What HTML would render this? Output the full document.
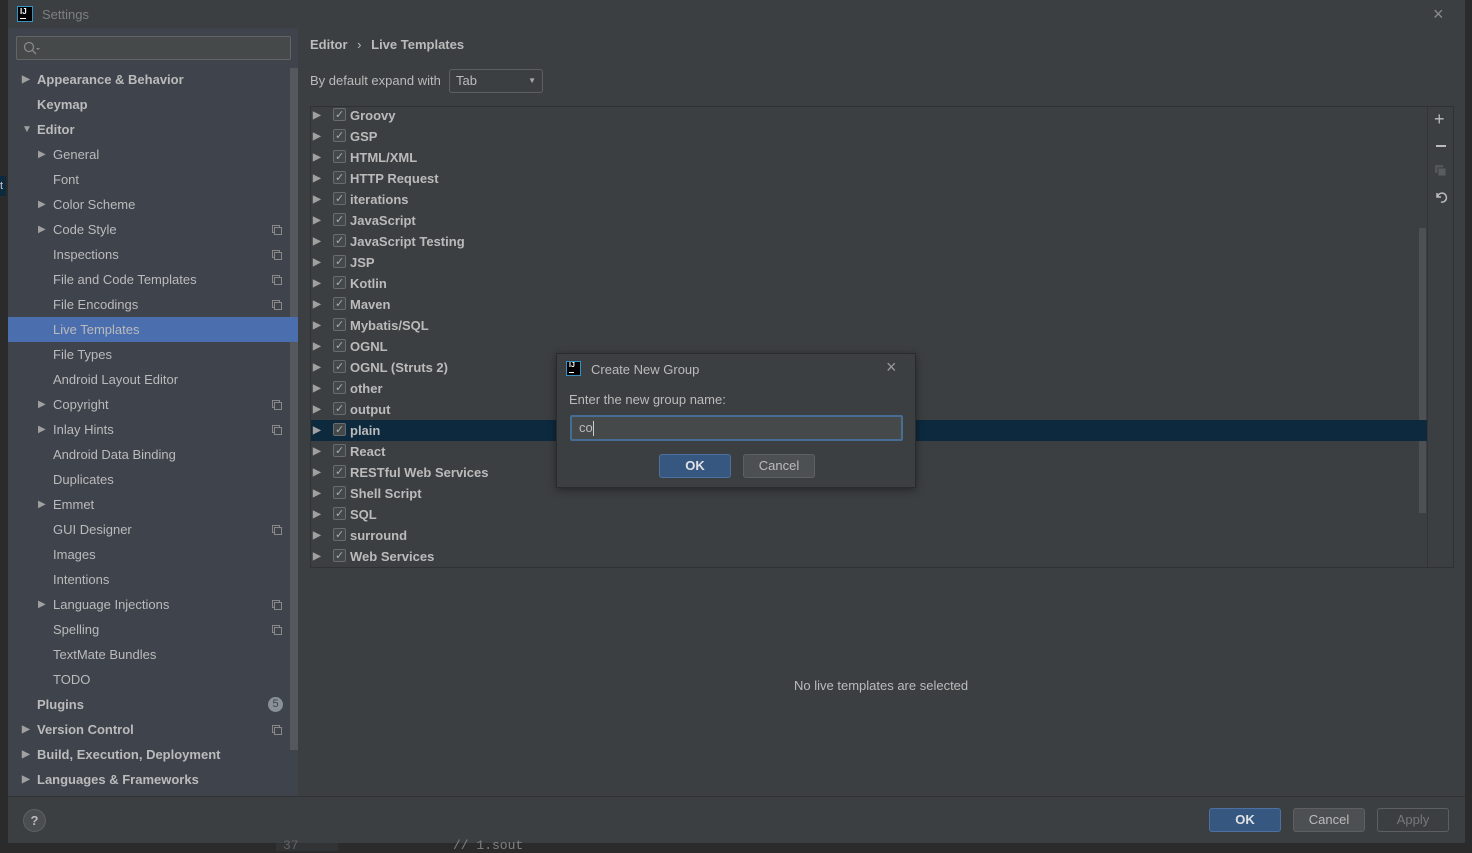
<!DOCTYPE html>
<html><head><meta charset="utf-8"><style>
*{box-sizing:border-box;margin:0;padding:0}
body{width:1472px;height:851px;background:#2b2b2b;font-family:"Liberation Sans",sans-serif;font-size:13px;color:#bbbbbb;position:relative;overflow:hidden}
.abs{position:absolute}
#win{left:8px;top:0;width:1457px;height:843px;background:#3c3f41}
.side{left:8px;top:28px;width:290px;height:768px;background:#3e434c}
.sr{position:absolute;left:0;width:290px;height:25px;line-height:25px;white-space:nowrap}
.b{font-weight:bold}
.tri{position:absolute;font-size:10px;color:#a0a0a0}
.cp{position:absolute;left:264px;top:8px;width:10px;height:10px}
.lr{position:absolute;left:0;width:1117px;height:21px;line-height:21px;font-weight:bold;white-space:nowrap}
.cb{position:absolute;left:22px;top:3px;width:13px;height:13px;border:1px solid #6b6b6b;border-radius:2px;background:#43494a}
.btn{position:absolute;height:24px;border-radius:3px;text-align:center;line-height:22px;border:1px solid #5e6060;background:#4c5052}
.ok{background:#365880;border-color:#4c70a0;color:#dfe1e5;font-weight:bold}
</style></head><body>
<div class="abs" style="left:0;top:0;width:8px;height:851px;background:#2b2b2b"></div>
<div class="abs" style="left:0;top:176px;width:6px;height:20px;background:#0d293e;color:#ccc;font-size:11px;line-height:20px">t</div>
<div class="abs" id="win"></div>
<!-- title -->
<div class="abs" style="left:17px;top:6px;width:16px;height:16px;background:#000;border:1px solid #3592c4;color:#fff;font-size:8px;font-weight:bold;line-height:9px;padding-left:2px">IJ<div style="width:6px;height:1px;background:#fff;margin-top:2px"></div></div>
<div class="abs" style="left:42px;top:7px;color:#7d7f81;font-size:13px">Settings</div>
<div class="abs" style="left:1433px;top:4px;color:#8c8c8c;font-size:18px">×</div>
<div class="abs side"></div>
<div class="abs" style="left:16px;top:36px;width:275px;height:24px;background:#45494a;border:1px solid #646464;border-radius:2px"><svg width="20" height="20" style="position:absolute;left:4px;top:2px"><circle cx="8" cy="8" r="4.5" fill="none" stroke="#888" stroke-width="1.3"/><path d="M11 11l4 4" stroke="#888" stroke-width="1.3"/><path d="M15 9h4l-2 2z" fill="#888"/></svg></div>
<div class="abs" style="left:290px;top:68px;width:8px;height:682px;background:#55585c"></div>
<div class="abs" style="left:8px;top:67px;width:290px;height:729px">
<div class="sr b" style="top:0"><span class="tri" style="left:14px">▶</span><span style="position:absolute;left:29px">Appearance &amp; Behavior</span></div>
<div class="sr b" style="top:25px"><span style="position:absolute;left:29px">Keymap</span></div>
<div class="sr b" style="top:50px"><span class="tri" style="left:14px">▼</span><span style="position:absolute;left:29px">Editor</span></div>
<div class="sr" style="top:75px"><span class="tri" style="left:30px">▶</span><span style="position:absolute;left:45px">General</span></div>
<div class="sr" style="top:100px"><span style="position:absolute;left:45px">Font</span></div>
<div class="sr" style="top:125px"><span class="tri" style="left:30px">▶</span><span style="position:absolute;left:45px">Color Scheme</span></div>
<div class="sr" style="top:150px"><span class="tri" style="left:30px">▶</span><span style="position:absolute;left:45px">Code Style</span><svg class="cp"><rect x="0.5" y="0.5" width="7" height="7" fill="none" stroke="#888"/><rect x="2.5" y="2.5" width="7" height="7" fill="#3e434c" stroke="#888"/></svg></div>
<div class="sr" style="top:175px"><span style="position:absolute;left:45px">Inspections</span><svg class="cp"><rect x="0.5" y="0.5" width="7" height="7" fill="none" stroke="#888"/><rect x="2.5" y="2.5" width="7" height="7" fill="#3e434c" stroke="#888"/></svg></div>
<div class="sr" style="top:200px"><span style="position:absolute;left:45px">File and Code Templates</span><svg class="cp"><rect x="0.5" y="0.5" width="7" height="7" fill="none" stroke="#888"/><rect x="2.5" y="2.5" width="7" height="7" fill="#3e434c" stroke="#888"/></svg></div>
<div class="sr" style="top:225px"><span style="position:absolute;left:45px">File Encodings</span><svg class="cp"><rect x="0.5" y="0.5" width="7" height="7" fill="none" stroke="#888"/><rect x="2.5" y="2.5" width="7" height="7" fill="#3e434c" stroke="#888"/></svg></div>
<div class="sr" style="top:250px;background:#4b6eaf"><span style="position:absolute;left:45px">Live Templates</span></div>
<div class="sr" style="top:275px"><span style="position:absolute;left:45px">File Types</span></div>
<div class="sr" style="top:300px"><span style="position:absolute;left:45px">Android Layout Editor</span></div>
<div class="sr" style="top:325px"><span class="tri" style="left:30px">▶</span><span style="position:absolute;left:45px">Copyright</span><svg class="cp"><rect x="0.5" y="0.5" width="7" height="7" fill="none" stroke="#888"/><rect x="2.5" y="2.5" width="7" height="7" fill="#3e434c" stroke="#888"/></svg></div>
<div class="sr" style="top:350px"><span class="tri" style="left:30px">▶</span><span style="position:absolute;left:45px">Inlay Hints</span><svg class="cp"><rect x="0.5" y="0.5" width="7" height="7" fill="none" stroke="#888"/><rect x="2.5" y="2.5" width="7" height="7" fill="#3e434c" stroke="#888"/></svg></div>
<div class="sr" style="top:375px"><span style="position:absolute;left:45px">Android Data Binding</span></div>
<div class="sr" style="top:400px"><span style="position:absolute;left:45px">Duplicates</span></div>
<div class="sr" style="top:425px"><span class="tri" style="left:30px">▶</span><span style="position:absolute;left:45px">Emmet</span></div>
<div class="sr" style="top:450px"><span style="position:absolute;left:45px">GUI Designer</span><svg class="cp"><rect x="0.5" y="0.5" width="7" height="7" fill="none" stroke="#888"/><rect x="2.5" y="2.5" width="7" height="7" fill="#3e434c" stroke="#888"/></svg></div>
<div class="sr" style="top:475px"><span style="position:absolute;left:45px">Images</span></div>
<div class="sr" style="top:500px"><span style="position:absolute;left:45px">Intentions</span></div>
<div class="sr" style="top:525px"><span class="tri" style="left:30px">▶</span><span style="position:absolute;left:45px">Language Injections</span><svg class="cp"><rect x="0.5" y="0.5" width="7" height="7" fill="none" stroke="#888"/><rect x="2.5" y="2.5" width="7" height="7" fill="#3e434c" stroke="#888"/></svg></div>
<div class="sr" style="top:550px"><span style="position:absolute;left:45px">Spelling</span><svg class="cp"><rect x="0.5" y="0.5" width="7" height="7" fill="none" stroke="#888"/><rect x="2.5" y="2.5" width="7" height="7" fill="#3e434c" stroke="#888"/></svg></div>
<div class="sr" style="top:575px"><span style="position:absolute;left:45px">TextMate Bundles</span></div>
<div class="sr" style="top:600px"><span style="position:absolute;left:45px">TODO</span></div>
<div class="sr b" style="top:625px"><span style="position:absolute;left:29px">Plugins</span><span style="position:absolute;left:260px;top:5px;width:15px;height:15px;border-radius:8px;background:#8a9099;color:#3e434c;font-size:11px;line-height:15px;text-align:center;font-weight:normal">5</span></div>
<div class="sr b" style="top:650px"><span class="tri" style="left:14px">▶</span><span style="position:absolute;left:29px">Version Control</span><svg class="cp"><rect x="0.5" y="0.5" width="7" height="7" fill="none" stroke="#888"/><rect x="2.5" y="2.5" width="7" height="7" fill="#3e434c" stroke="#888"/></svg></div>
<div class="sr b" style="top:675px"><span class="tri" style="left:14px">▶</span><span style="position:absolute;left:29px">Build, Execution, Deployment</span></div>
<div class="sr b" style="top:700px"><span class="tri" style="left:14px">▶</span><span style="position:absolute;left:29px">Languages &amp; Frameworks</span></div>
</div>
<!-- main -->
<div class="abs b" style="left:310px;top:37px">Editor <span style="font-weight:normal;margin:0 6px">›</span> Live Templates</div>
<div class="abs" style="left:310px;top:73px">By default expand with</div>
<div class="abs" style="left:449px;top:69px;width:94px;height:24px;border:1px solid #5e6060;border-radius:3px;background:#3c3f41;padding-left:6px;line-height:22px">Tab<span style="position:absolute;right:6px;top:0;font-size:8px;color:#aaa">▼</span></div>
<div class="abs" style="left:310px;top:106px;width:1144px;height:462px;border:1px solid #2f3133"></div>
<div class="abs" style="left:1427px;top:107px;width:1px;height:460px;background:#323436"></div>
<div class="abs" style="left:1419px;top:228px;width:7px;height:285px;background:#4e5154"></div>
<div class="abs" style="left:311px;top:420px;width:1116px;height:21px;background:#0d293e"></div>
<div class="abs" style="left:311px;top:105px;width:1117px;height:462px">
<div class="lr" style="top:0"><span class="tri" style="left:2px">▶</span><span class="cb"></span><span style="position:absolute;left:24px;top:0;font-size:11px;color:#aaa;font-weight:normal">✓</span><span style="position:absolute;left:39px">Groovy</span></div>
</div>
<div id="rows"></div>
<script>
var n=["Groovy","GSP","HTML/XML","HTTP Request","iterations","JavaScript","JavaScript Testing","JSP","Kotlin","Maven","Mybatis/SQL","OGNL","OGNL (Struts 2)","other","output","plain","React","RESTful Web Services","Shell Script","SQL","surround","Web Services"],h="";
n.forEach(function(t,i){h+='<div class="lr" style="left:311px;top:'+(105+i*21)+'px"><span class="tri" style="left:2px">▶</span><span class="cb"></span><span style="position:absolute;left:24px;top:0;font-size:11px;color:#aaa;font-weight:normal">✓</span><span style="position:absolute;left:39px">'+t+'</span></div>';});
document.getElementById('rows').innerHTML=h;document.querySelector('.abs[style*="top:105px;width:1117px"]').remove();
</script>
<style>.lr{position:absolute}</style>
<div class="abs" style="left:1434px;top:108px;color:#bbb;font-size:18px;line-height:22px">+</div>
<div class="abs" style="left:1436px;top:145px;width:10px;height:2px;background:#bbb"></div>
<svg class="abs" style="left:1434px;top:164px" width="14" height="14"><rect x="1" y="1" width="8" height="8" fill="#555"/><rect x="4" y="4" width="8" height="8" fill="#5a5d60" stroke="#3c3f41"/></svg>
<svg class="abs" style="left:1434px;top:190px" width="14" height="14"><path d="M3 3v4h4" fill="none" stroke="#bbb" stroke-width="1.5"/><path d="M3.5 7A4.5 4.5 0 1 1 7 12" fill="none" stroke="#bbb" stroke-width="1.5"/></svg>
<div class="abs" style="left:794px;top:678px">No live templates are selected</div>
<!-- bottom -->
<div class="abs" style="left:8px;top:796px;width:1457px;height:1px;background:#323232"></div>
<div class="abs" style="left:23px;top:809px;width:23px;height:23px;border-radius:12px;background:#4a4e50;border:1px solid #5e6060;text-align:center;line-height:21px;font-weight:bold;color:#bbb">?</div>
<div class="btn ok" style="left:1209px;top:808px;width:72px">OK</div>
<div class="btn" style="left:1293px;top:808px;width:72px">Cancel</div>
<div class="btn" style="left:1377px;top:808px;width:72px;background:#3c3f41;color:#777">Apply</div>
<div class="abs" style="left:0;top:843px;width:1472px;height:8px;background:#2b2b2b"></div>
<div class="abs" style="left:1465px;top:0;width:7px;height:851px;background:#2b2b2b"></div>
<div class="abs" style="left:276px;top:843px;width:62px;height:8px;background:#313335"></div>
<div class="abs" style="left:283px;top:838px;font-family:'Liberation Mono',monospace;color:#606366;font-size:13px">37</div>
<div class="abs" style="left:453px;top:838px;font-family:'Liberation Mono',monospace;color:#808080;font-size:13px">// 1.sout</div>
<!-- dialog -->
<div class="abs" style="left:556px;top:353px;width:360px;height:135px;background:#3c3f41;border:1px solid #2b2b2b;box-shadow:0 2px 8px rgba(0,0,0,.4)">
<div class="abs" style="left:9px;top:7px;width:15px;height:15px;background:#000;border:1px solid #3592c4;color:#fff;font-size:7px;font-weight:bold;line-height:8px;padding-left:2px">IJ<div style="width:5px;height:1px;background:#fff;margin-top:2px"></div></div>
<div class="abs" style="left:34px;top:8px">Create New Group</div>
<div class="abs" style="left:329px;top:3px;color:#999;font-size:18px">×</div>
<div class="abs" style="left:12px;top:38px">Enter the new group name:</div>
<div class="abs" style="left:13px;top:61px;width:333px;height:26px;border:2px solid #466d94;border-radius:2px;background:#45494a;padding-left:7px;line-height:22px">co<span style="display:inline-block;width:1px;height:15px;background:#ccc;vertical-align:middle"></span></div>
<div class="btn ok" style="left:102px;top:100px;width:72px">OK</div>
<div class="btn" style="left:186px;top:100px;width:72px">Cancel</div>
</div>
</body></html>
